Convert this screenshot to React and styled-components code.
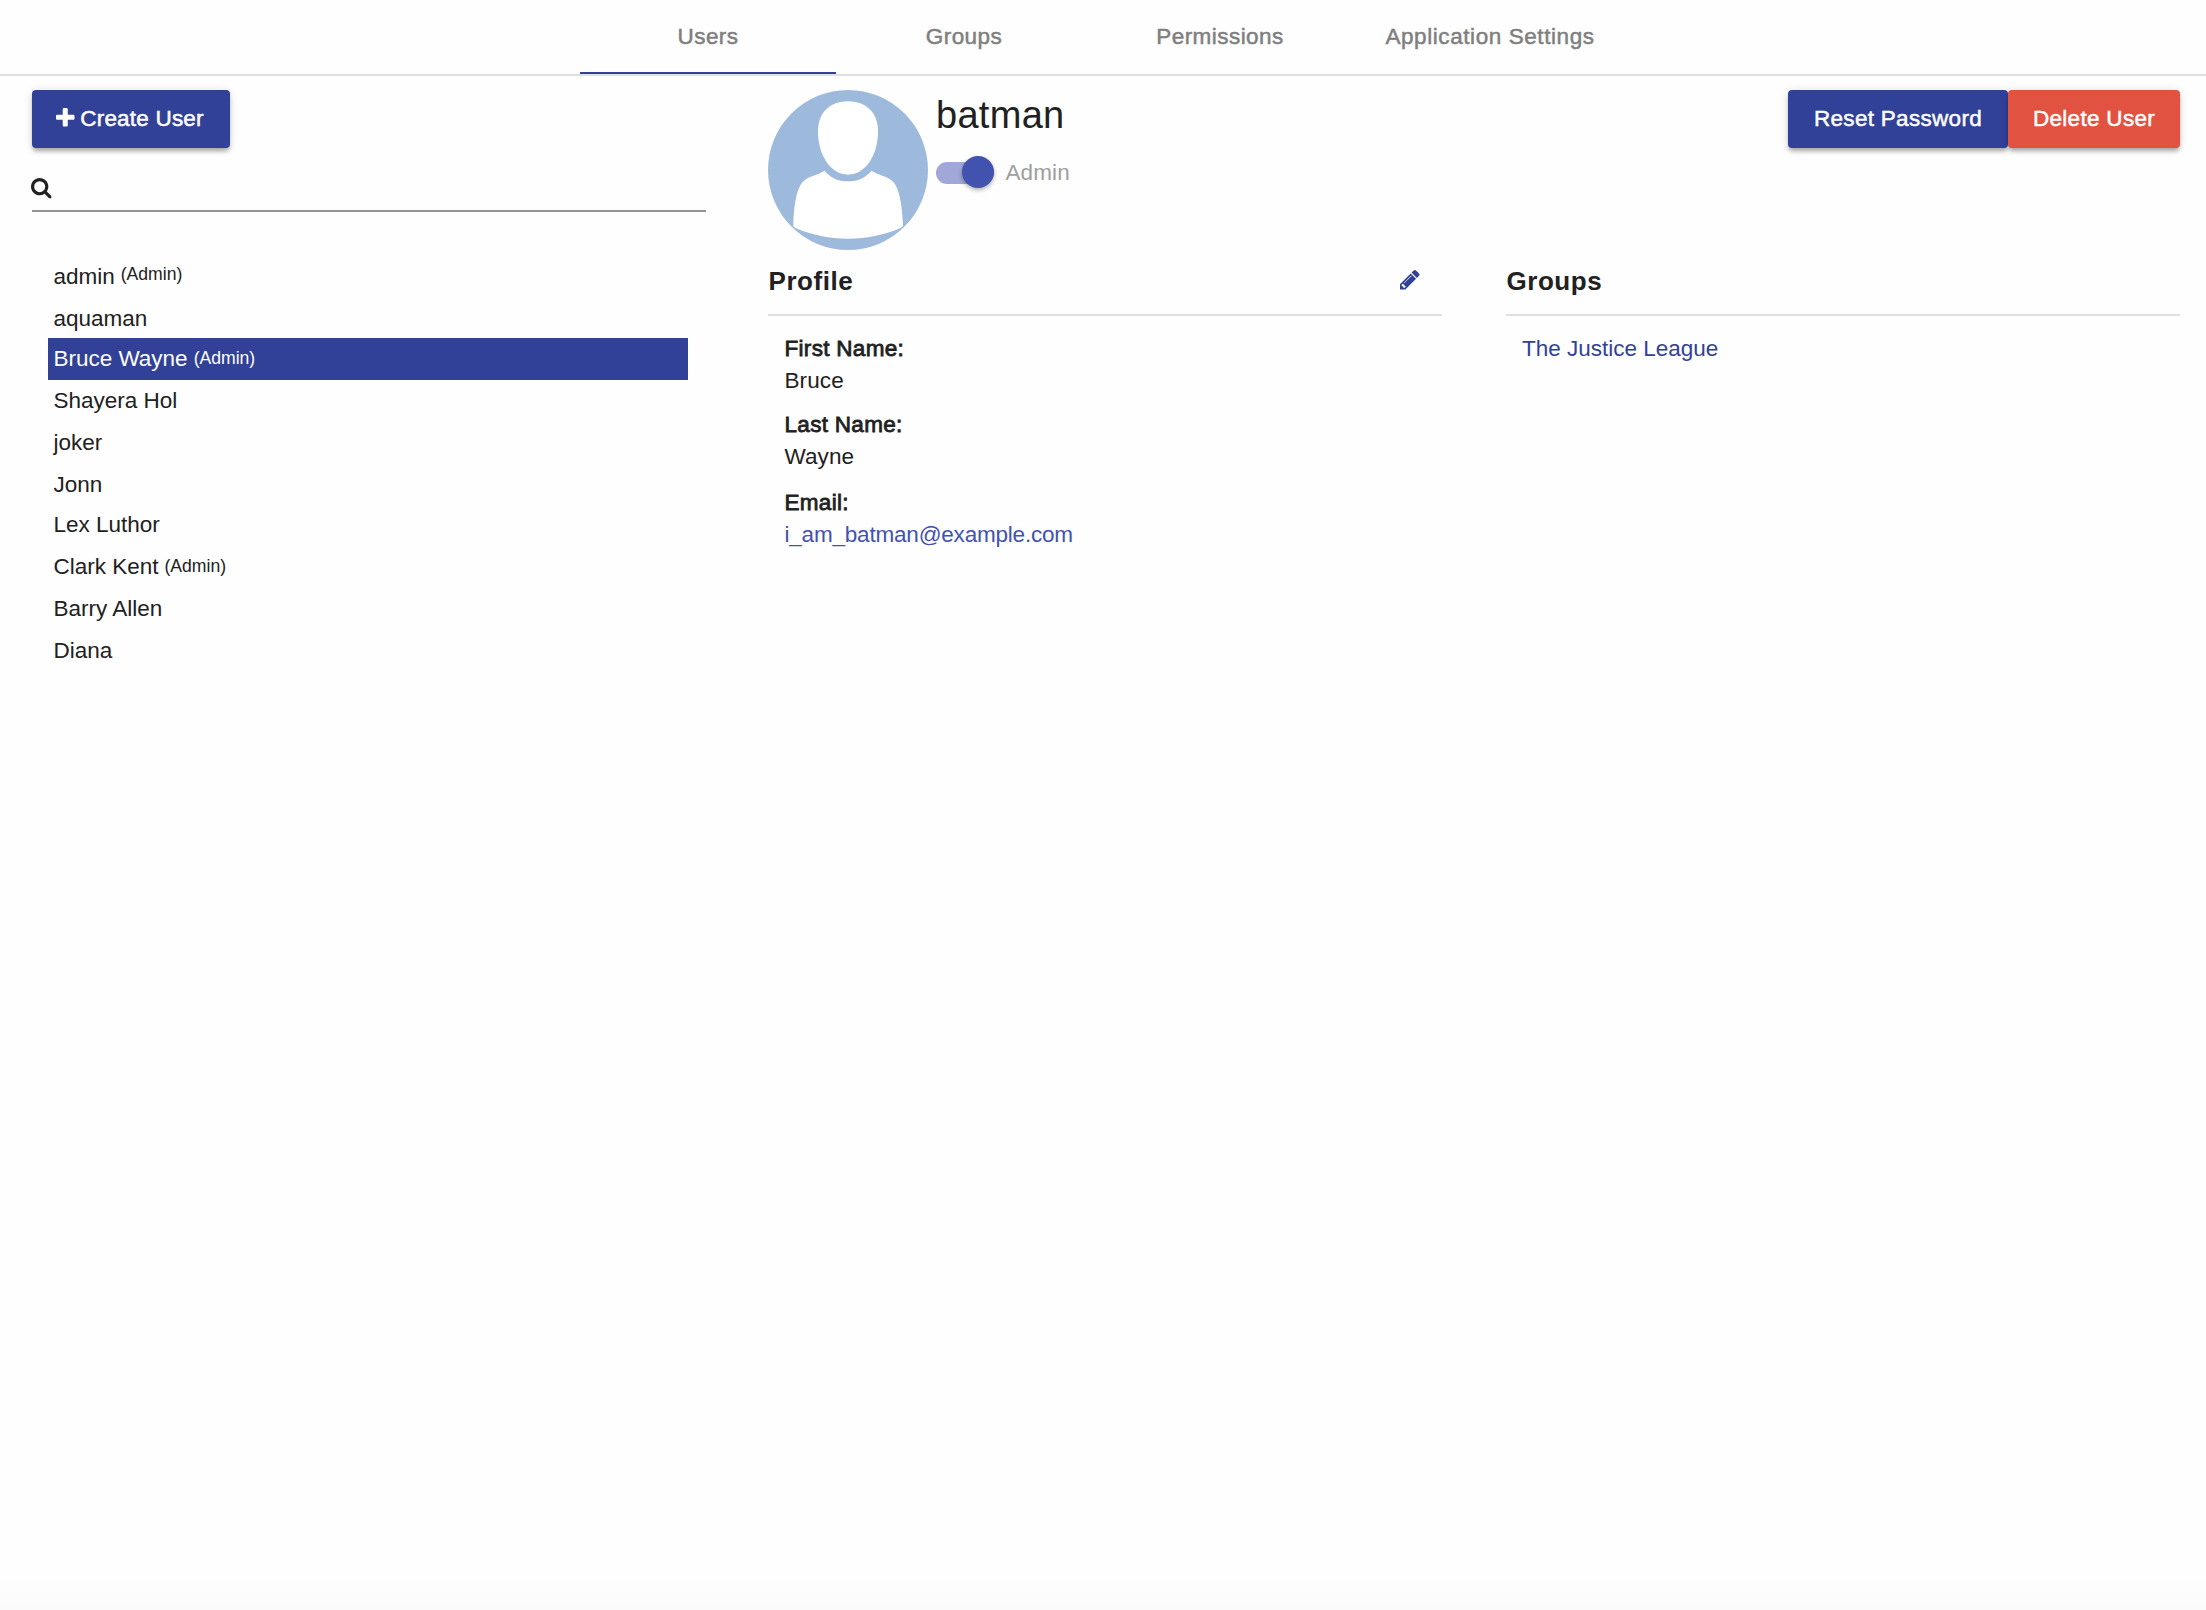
import React from "react";
import styled, { createGlobalStyle, css } from "styled-components";

const color = {
  page: "#fefefe",
  primary: "#314198",
  accent: "#4252af",
  danger: "#e15241",
  text: "#212121",
  rule: "#e0e0e0",
};

const GlobalStyle = createGlobalStyle`
  *, *::before, *::after { box-sizing: border-box; }
  body {
    margin: 0;
    background: ${color.page};
    color: ${color.text};
    font-family: "Liberation Sans", Arial, sans-serif;
    font-size: 22.5px;
  }
  ul, h1, h2, dl, dd, dt { margin: 0; padding: 0; }
  ul { list-style: none; }
`;

const medium = css`
  -webkit-text-stroke: 0.5px currentColor;
`;

const Page = styled.div`
  display: flex;
  flex-direction: column;
  min-height: 1610px;
  background: linear-gradient(#fefefe, #fbfbfb) bottom / 100% 36px no-repeat;
`;

const TabBar = styled.nav`
  display: flex;
  height: 76px;
  padding-left: 580px;
  border-bottom: 2px solid ${color.rule};
`;

const Tab = styled.a`
  ${medium}
  width: ${(p) => p.$width}px;
  height: 74px;
  border-bottom: 2px solid ${(p) => (p.$active ? color.primary : "transparent")};
  color: #7f7f7f;
  line-height: 73px;
  letter-spacing: ${(p) => p.$spacing}px;
  text-align: center;
  white-space: nowrap;
`;

const Columns = styled.div`
  display: flex;
  gap: 62px;
  padding: 14px 26px 0 32px;
`;

const Sidebar = styled.aside`
  display: flex;
  flex-direction: column;
  align-items: flex-start;
  width: 674px;
`;

const Button = styled.button`
  ${medium}
  display: flex;
  justify-content: center;
  width: ${(p) => p.$width}px;
  height: 58px;
  padding: 0;
  border: 0;
  border-radius: 4px;
  background: ${(p) => (p.$danger ? color.danger : color.primary)};
  box-shadow: 0 4px 4px -1px rgba(0, 0, 0, 0.3), 0 1px 10px rgba(0, 0, 0, 0.12);
  color: #fefefe;
  font: inherit;
  line-height: 57px;
  letter-spacing: ${(p) => p.$spacing}px;
  white-space: nowrap;
`;

const ButtonIcon = styled.svg`
  width: 18.5px;
  height: 18.5px;
  margin: 18px 5.5px 0 -2px;
  fill: currentColor;
  stroke: none;
`;

const SearchField = styled.label`
  display: flex;
  width: 100%;
  height: 64px;
  padding-top: 30px;
  border-bottom: 2px solid #949494;
`;

const SearchIcon = styled.svg`
  width: 20.5px;
  height: 20.5px;
  margin-left: -0.8px;
  fill: ${color.text};
`;

const UserList = styled.ul`
  width: 640px;
  margin: 44px 0 0 16px;
`;

const UserRow = styled.li`
  height: ${(p) => (p.$tight ? 40 : 42)}px;
  padding-left: 5.4px;
  background: ${(p) => (p.$selected ? color.primary : "transparent")};
  color: ${(p) => (p.$selected ? "#fefefe" : "inherit")};
  line-height: 41px;
  white-space: nowrap;
`;

const Role = styled.small`
  position: relative;
  top: ${(p) => -p.$raise}px;
  margin-left: 6px;
  font-size: 17.6px;
  line-height: 0;
`;

const Detail = styled.main`
  display: flex;
  flex: 1;
  flex-direction: column;
`;

const DetailHeader = styled.header`
  display: flex;
  height: 160px;
`;

const Avatar = styled.svg`
  width: 160px;
  height: 160px;
`;

const Identity = styled.div`
  flex: 1;
  padding-left: 8px;
`;

const UserName = styled.h1`
  font-size: 38px;
  font-weight: 400;
  line-height: 50px;
  letter-spacing: 0.3px;
`;

const SwitchRow = styled.label`
  display: flex;
  gap: 11.5px;
  height: 32px;
  margin-top: 16px;
  color: #9e9e9e;
  line-height: 33px;
  letter-spacing: 0.1px;
`;

const Track = styled.span`
  display: flex;
  justify-content: flex-end;
  width: 58px;
  height: 22px;
  margin-top: 6px;
  border-radius: 11px;
  background: #a1a8d7;
`;

const Knob = styled.span`
  width: 32px;
  height: 32px;
  margin-top: -6px;
  border-radius: 50%;
  background: ${color.accent};
  box-shadow: 0 2px 4px rgba(0, 0, 0, 0.32);
`;

const Actions = styled.div`
  display: flex;
`;

const Panels = styled.div`
  display: grid;
  grid-template-columns: 674px 674px;
  column-gap: 64px;
`;

const PanelHeader = styled.div`
  display: flex;
  justify-content: space-between;
  height: 66px;
  padding: 0 22.5px 2px 0.5px;
  border-bottom: 2px solid ${color.rule};
`;

const PanelTitle = styled.h2`
  font-size: 26px;
  font-weight: 700;
  line-height: 62px;
  letter-spacing: 0.55px;
`;

const EditIcon = styled.svg`
  width: 19.5px;
  height: 19.5px;
  margin-top: 20.3px;
  fill: ${color.primary};
`;

const Fields = styled.dl`
  padding: 16px 0 0 16.5px;
`;

const Field = styled.div`
  padding-bottom: ${(p) => p.$gap}px;
`;

const FieldName = styled.dt`
  -webkit-text-stroke: 0.8px currentColor;
  line-height: 33px;
  letter-spacing: 0.3px;
`;

const FieldValue = styled.dd`
  color: ${(p) => (p.$link ? color.accent : "inherit")};
  line-height: 31px;
  letter-spacing: ${(p) => (p.$link ? -0.2 : 0.1)}px;
`;

const GroupList = styled.ul`
  padding: 16px 0 0 16px;
`;

const GroupItem = styled.li`
  color: ${color.primary};
  line-height: 33px;
`;

const tabs = [
  { label: "Users", width: 256, spacing: 0.45, active: true },
  { label: "Groups", width: 256, spacing: 0.45 },
  { label: "Permissions", width: 256, spacing: 0.45 },
  { label: "Application Settings", width: 284, spacing: 0.58 },
];

const users = [
  { name: "admin", admin: true, raise: 4 },
  { name: "aquaman", tight: true },
  { name: "Bruce Wayne", admin: true, raise: 2, selected: true },
  { name: "Shayera Hol" },
  { name: "joker" },
  { name: "Jonn", tight: true },
  { name: "Lex Luthor" },
  { name: "Clark Kent", admin: true, raise: 2 },
  { name: "Barry Allen" },
  { name: "Diana" },
];

const fields = [
  { name: "First Name:", value: "Bruce", gap: 12 },
  { name: "Last Name:", value: "Wayne", gap: 14 },
  { name: "Email:", value: "i_am_batman@example.com", link: true, gap: 0 },
];

export default function App() {
  return (
    <>
      <GlobalStyle />
      <Page>
        <TabBar>
          {tabs.map((t) => (
            <Tab key={t.label} $width={t.width} $spacing={t.spacing} $active={t.active}>
              {t.label}
            </Tab>
          ))}
        </TabBar>
        <Columns>
          <Sidebar>
            <Button $width={198} $spacing={0.2}>
              <ButtonIcon viewBox="192 128 1408 1408">
                <path d="M1600 736v192q0 40-28 68t-68 28h-416v416q0 40-28 68t-68 28h-192q-40 0-68-28t-28-68v-416h-416q-40 0-68-28t-28-68v-192q0-40 28-68t68-28h416v-416q0-40 28-68t68-28h192q40 0 68 28t28 68v416h416q40 0 68 28t28 68z" />
              </ButtonIcon>
              Create User
            </Button>
            <SearchField>
              <SearchIcon viewBox="64 128 1664 1664">
                <path d="M1216 832q0-185-131.5-316.5t-316.5-131.5-316.5 131.5-131.5 316.5 131.5 316.5 316.5 131.5 316.5-131.5 131.5-316.5zm512 832q0 52-38 90t-90 38q-54 0-90-38l-343-342q-179 124-399 124-143 0-273.5-55.5t-225-150-150-225-55.5-273.5 55.5-273.5 150-225 225-150 273.5-55.5 273.5 55.5 225 150 150 225 55.5 273.5q0 220-124 399l343 343q37 37 37 90z" />
              </SearchIcon>
            </SearchField>
            <UserList>
              {users.map((u) => (
                <UserRow key={u.name} $tight={u.tight} $selected={u.selected}>
                  {u.name}
                  {u.admin && <Role $raise={u.raise}>(Admin)</Role>}
                </UserRow>
              ))}
            </UserList>
          </Sidebar>
          <Detail>
            <DetailHeader>
              <Avatar viewBox="0 0 480 480">
                <circle cx="240" cy="240" r="240" fill="#9dbadd" />
                <path
                  fill="#fff"
                  d="M240 34C294 34 330 68 330 124C330 196 292 254 240 254C188 254 150 196 150 124C150 68 186 34 240 34Z"
                />
                <path
                  fill="#fff"
                  d="M170 242C186 263 211 274 240 274C269 274 294 263 310 242C328 254 350 255 372 272C394 290 402 345 405 402C406 410 402 412 396 415C348 436 294 446 240 446C186 446 132 436 84 415C78 412 75 410 76 402C78 345 86 290 108 272C130 255 152 254 170 242Z"
                />
              </Avatar>
              <Identity>
                <UserName>batman</UserName>
                <SwitchRow>
                  <Track>
                    <Knob />
                  </Track>
                  Admin
                </SwitchRow>
              </Identity>
              <Actions>
                <Button $width={220} $spacing={0.3}>Reset Password</Button>
                <Button $width={172} $spacing={0.3} $danger>Delete User</Button>
              </Actions>
            </DetailHeader>
            <Panels>
              <section>
                <PanelHeader>
                  <PanelTitle>Profile</PanelTitle>
                  <EditIcon viewBox="128 149 1515 1515">
                    <path d="M491 1536l91-91-235-235-91 91v107h128v128h107zm523-928q0-22-22-22-10 0-17 7l-542 542q-7 7-7 17 0 22 22 22 10 0 17-7l542-542q7-7 7-17zm-54-192l416 416-832 832h-416v-416zm683 96q0 53-37 90l-166 166-416-416 166-165q36-38 90-38 53 0 91 38l235 234q37 39 37 91z" />
                  </EditIcon>
                </PanelHeader>
                <Fields>
                  {fields.map((f) => (
                    <Field key={f.name} $gap={f.gap}>
                      <FieldName>{f.name}</FieldName>
                      <FieldValue $link={f.link}>{f.value}</FieldValue>
                    </Field>
                  ))}
                </Fields>
              </section>
              <section>
                <PanelHeader>
                  <PanelTitle>Groups</PanelTitle>
                </PanelHeader>
                <GroupList>
                  <GroupItem>The Justice League</GroupItem>
                </GroupList>
              </section>
            </Panels>
          </Detail>
        </Columns>
      </Page>
    </>
  );
}
